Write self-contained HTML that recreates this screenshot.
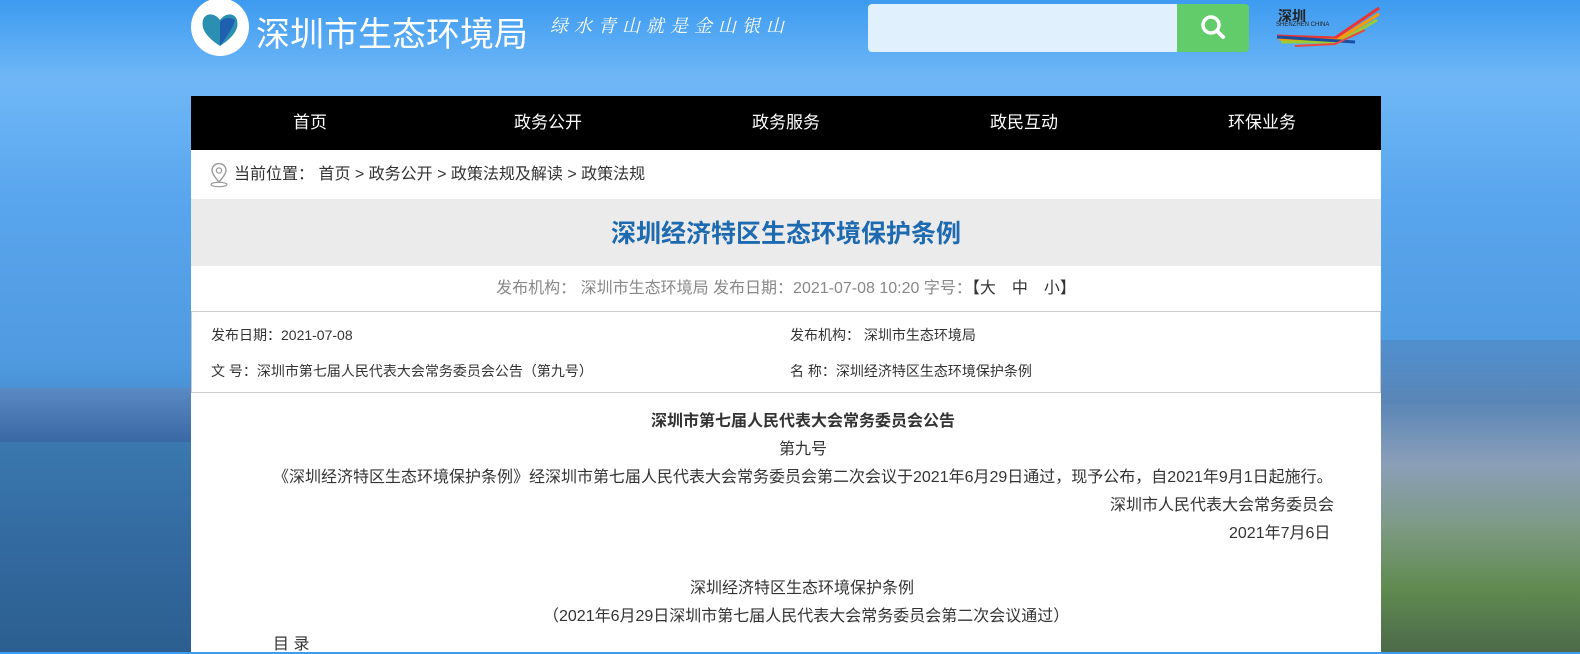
<!DOCTYPE html>
<html><head><meta charset="utf-8"><style>
*{margin:0;padding:0;box-sizing:border-box}
body{width:1580px;height:652px;overflow:hidden;position:relative;font-family:"Liberation Sans","Noto Sans CJK SC",sans-serif;
background:linear-gradient(180deg,#3d9bf0 0%,#6fb7f7 12%,#5aa6ee 30%,#4f9ae0 55%,#4488c8 65%,#2f6ea8 100%);}
.lw{position:absolute;left:0;top:442px;width:191px;height:210px;background:linear-gradient(180deg,#3a78ae,#31679c 60%,#2c5f90);}
.lb{position:absolute;left:0;top:388px;width:191px;height:54px;background:linear-gradient(180deg,#5a8ac4,#3a68a4);}
.rc{position:absolute;left:1381px;top:340px;width:199px;height:312px;background:linear-gradient(180deg,#4f8fcf 0%,#5a86b7 20%,#8b9fb8 40%,#7d9a84 60%,#5f8a4f 80%,#4c6a4a 100%);}
.wrap{position:absolute;left:191px;top:96px;width:1190px;height:556px;background:#fff}
.nav{height:54px;background:#000;display:flex}
.nav div{flex:1;color:#fff;font-size:17px;text-align:center;line-height:54px}
.bc{height:49px;line-height:50px;padding-left:43px;font-size:16px;color:#333;position:relative}
.title{height:67px;background:#ebebeb;text-align:center;line-height:70px;font-size:25px;font-weight:bold;color:#1e6ab0}
.meta{height:45px;text-align:center;line-height:46px;font-size:16px;color:#888}
.info{height:82px;border:1px solid #ccc;position:relative;font-size:14px;color:#333}
.info span{position:absolute}
.c{font-size:16px;color:#333;position:absolute;white-space:nowrap}
</style></head><body>
<div class="lb"></div><div class="lw"></div><div class="rc"></div>
<div style="position:absolute;left:191px;top:-2px;width:58px;height:58px;border-radius:50%;background:#fff"></div>
<svg style="position:absolute;left:199px;top:10px" width="42" height="38" viewBox="0 0 42 38"><path d="M21 36 C6 26 2 18 4 10 C6 3 15 2 21 10 C27 2 36 3 38 10 C40 18 36 26 21 36Z" fill="#2a8fb0"/><path d="M21 36 C28 26 34 18 36 10 C30 6 24 8 21 12Z" fill="#1f5fb0"/></svg>
<div style="position:absolute;left:256px;top:7px;font-size:34px;color:#fff">深圳市生态环境局</div>
<div style="position:absolute;left:550px;top:12px;font-size:18px;color:#fff;letter-spacing:6px;font-family:'Liberation Serif','Noto Serif CJK SC',serif;font-style:italic">绿水青山就是金山银山</div>
<div style="position:absolute;left:868px;top:4px;width:310px;height:48px;background:#e0f0fd;border-radius:4px 0 0 4px"></div>
<div style="position:absolute;left:1177px;top:4px;width:72px;height:48px;background:#62cc6a;border-radius:0 4px 4px 0"></div>
<svg style="position:absolute;left:1199px;top:13px" width="28" height="30" viewBox="0 0 28 30"><circle cx="12" cy="12" r="8" stroke="#fff" stroke-width="3.5" fill="none"/><path d="M18 18 L24 24" stroke="#fff" stroke-width="4" stroke-linecap="round"/></svg>
<div style="position:absolute;left:1278px;top:6px;font-size:14px;color:#222;font-weight:bold">深圳</div>
<div style="position:absolute;left:1276px;top:22px;font-size:6px;color:#222">SHENZHEN CHINA</div>
<svg style="position:absolute;left:1275px;top:6px" width="108" height="44" viewBox="0 0 108 44"><path d="M2 30 L60 32 L104 2" stroke="#e33" stroke-width="3" fill="none"/><path d="M4 33 L62 34 L104 8" stroke="#f90" stroke-width="3" fill="none"/><path d="M6 36 L64 36 L102 14" stroke="#9c3" stroke-width="3" fill="none"/><path d="M2 31 L80 36" stroke="#1a4ea0" stroke-width="3"/><path d="M20 40 L60 38 L90 24" stroke="#e44" stroke-width="2" fill="none"/></svg>
<div class="wrap">
<div class="nav"><div>首页</div><div>政务公开</div><div>政务服务</div><div>政民互动</div><div>环保业务</div></div>
<div class="bc"><svg style="position:absolute;left:18px;top:13px" width="20" height="25" viewBox="0 0 20 25"><path d="M10 19 C4 12 3 9 3 7.5 A7 7 0 0 1 17 7.5 C17 9 16 12 10 19Z" fill="none" stroke="#999" stroke-width="1.4"/><circle cx="10" cy="7.5" r="2.6" fill="none" stroke="#999" stroke-width="1.3"/><ellipse cx="10" cy="21.5" rx="8" ry="2.2" fill="none" stroke="#999" stroke-width="1.2"/></svg>当前位置： 首页 &gt; 政务公开 &gt; 政策法规及解读 &gt; 政策法规</div>
<div class="title">深圳经济特区生态环境保护条例</div>
<div class="meta">发布机构： 深圳市生态环境局 发布日期：2021-07-08 10:20 字号：<span style="color:#333">【大　中　小】</span></div>
<div class="info">
<span style="left:19px;top:13px">发布日期：2021-07-08</span>
<span style="left:598px;top:13px">发布机构： 深圳市生态环境局</span>
<span style="left:19px;top:49px">文 号：深圳市第七届人民代表大会常务委员会公告（第九号）</span>
<span style="left:598px;top:49px">名 称：深圳经济特区生态环境保护条例</span>
</div>
<div class="c" style="left:460px;top:311px;font-weight:bold">深圳市第七届人民代表大会常务委员会公告</div>
<div class="c" style="left:588px;top:339px">第九号</div>
<div class="c" style="left:82px;top:367px">《深圳经济特区生态环境保护条例》经深圳市第七届人民代表大会常务委员会第二次会议于2021年6月29日通过，现予公布，自2021年9月1日起施行。</div>
<div class="c" style="left:919px;top:395px">深圳市人民代表大会常务委员会</div>
<div class="c" style="left:1038px;top:423px">2021年7月6日</div>
<div class="c" style="left:499px;top:478px">深圳经济特区生态环境保护条例</div>
<div class="c" style="left:352px;top:506px">（2021年6月29日深圳市第七届人民代表大会常务委员会第二次会议通过）</div>
<div class="c" style="left:82px;top:534px">目  录</div>
</div>
</body></html>
